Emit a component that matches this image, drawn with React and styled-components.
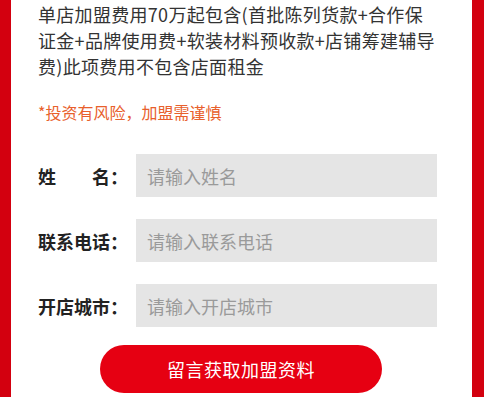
import React from "react";
import styled, { createGlobalStyle } from "styled-components";

const fields = [
    { label: ["姓", "名："], placeholder: "请输入姓名" },
    { label: ["联系电话："], placeholder: "请输入联系电话" },
    { label: ["开店城市："], placeholder: "请输入开店城市" },
];

const App = () => {
    return (
        <>
            <GlobalStyles />
            <Frame>
                <Panel>
                    <Intro>
                        单店加盟费用70万起包含(首批陈列货款+合作保
                        <br />
                        证金+品牌使用费+软装材料预收款+店铺筹建辅导
                        <br />
                        费)此项费用不包含店面租金
                    </Intro>
                    <Warning>*投资有风险，加盟需谨慎</Warning>
                    <Form>
                        {fields.map((field) => (
                            <Row key={field.placeholder}>
                                <Label>
                                    {field.label.map((part) => (
                                        <span key={part}>{part}</span>
                                    ))}
                                </Label>
                                <Input placeholder={field.placeholder} />
                            </Row>
                        ))}
                    </Form>
                    <Submit>留言获取加盟资料</Submit>
                </Panel>
            </Frame>
        </>
    );
};

const GlobalStyles = createGlobalStyle`
    html, body {
        margin: 0;
        padding: 0;
        background: #d3000f;
    }
    body {
        font-family: "Noto Sans CJK SC", "Noto Sans", sans-serif;
    }
`;

const Frame = styled.main`
    width: 484px;
    height: 397px;
    padding: 0 12px 0 11px;
    box-sizing: border-box;
    background: #d3000f;
    overflow: hidden;
`;

const Panel = styled.section`
    height: 100%;
    background: #fff;
    padding: 1px 10px 0 27px;
    box-sizing: border-box;
    display: flex;
    flex-direction: column;
`;

const Intro = styled.p`
    margin: 0;
    font-size: 18px;
    line-height: 26px;
    letter-spacing: 0.3px;
    white-space: nowrap;
    color: #333;
`;

const Warning = styled.p`
    margin: 21px 0 0;
    font-size: 16px;
    line-height: 24px;
    color: #e8602c;
`;

const Form = styled.div`
    margin-top: 30px;
    display: flex;
    flex-direction: column;
    gap: 22px;
`;

const Row = styled.div`
    display: flex;
    align-items: center;
`;

const Label = styled.label`
    width: 90px;
    margin-right: 8px;
    display: flex;
    justify-content: space-between;
    font-size: 18px;
    font-weight: 700;
    color: #222;
    white-space: nowrap;
`;

const Input = styled.input`
    width: 301px;
    height: 43px;
    flex-shrink: 0;
    box-sizing: border-box;
    border: none;
    outline: none;
    background: #e5e5e5;
    padding: 0 11px;
    font-family: inherit;
    font-size: 18px;
    color: #333;

    &::placeholder {
        color: #9a9a9a;
    }
`;

const Submit = styled.button`
    align-self: center;
    margin: 18px 0 0 -18px;
    width: 282px;
    height: 48px;
    flex-shrink: 0;
    border: none;
    border-radius: 24px;
    background: #e60012;
    color: #fff;
    font-family: inherit;
    font-size: 18px;
    letter-spacing: 0.5px;
`;

export default App;
